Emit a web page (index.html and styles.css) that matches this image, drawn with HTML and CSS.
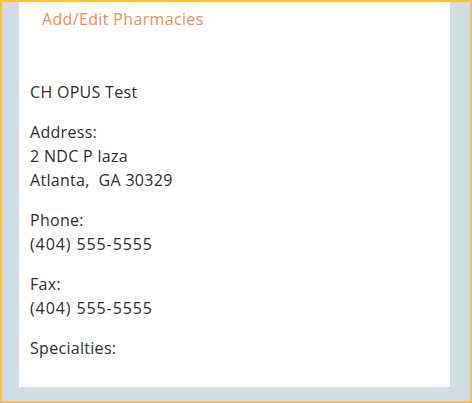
FILE: index.html
```html
<html lang="en">
<head>
    <meta charset="UTF-8">
    <meta name="viewport" content="width=device-width, initial-scale=1.0">
    <title>Pharmacy</title>
    <link rel="stylesheet" href="styles.css">
</head>
<body>
    <div class="frame">
        <div class="panel">
            <a class="edit-link" href="#">Add/Edit Pharmacies</a>
            <div class="details">
                <p>CH OPUS Test</p>
                <p>Address:<br>2 NDC P laza<br>Atlanta,&nbsp; GA 30329</p>
                <p>Phone:<br><span class="num">(404) 555-5555</span></p>
                <p>Fax:<br><span class="num">(404) 555-5555</span></p>
                <p>Specialties:</p>
            </div>
        </div>
    </div>
</body>
</html>
```

FILE: styles.css
```css
html, body {
    margin: 0;
    height: 100%;
}
body {
    font-family: "Open Sans", Arial, sans-serif;
    background: #fff;
}
.frame {
    box-sizing: border-box;
    height: 403px;
    border: 2px solid #fbbf4f;
    background: #d1dde4;
    padding: 0 20px 14px 17px;
}
.panel {
    background: #fff;
    height: 100%;
    padding: 6px 0 0 11px;
    box-sizing: border-box;
}
.edit-link {
    display: inline-block;
    margin-left: 12px;
    color: #ef8a5a;
    font-size: 16px;
    letter-spacing: 0.35px;
    text-decoration: none;
}
.details {
    margin-top: 50px;
    color: #2d2d2d;
    font-size: 16px;
    letter-spacing: 0.3px;
    line-height: 24px;
}
.details p {
    margin: 0 0 16px;
}
.num {
    letter-spacing: 0.9px;
}
```
